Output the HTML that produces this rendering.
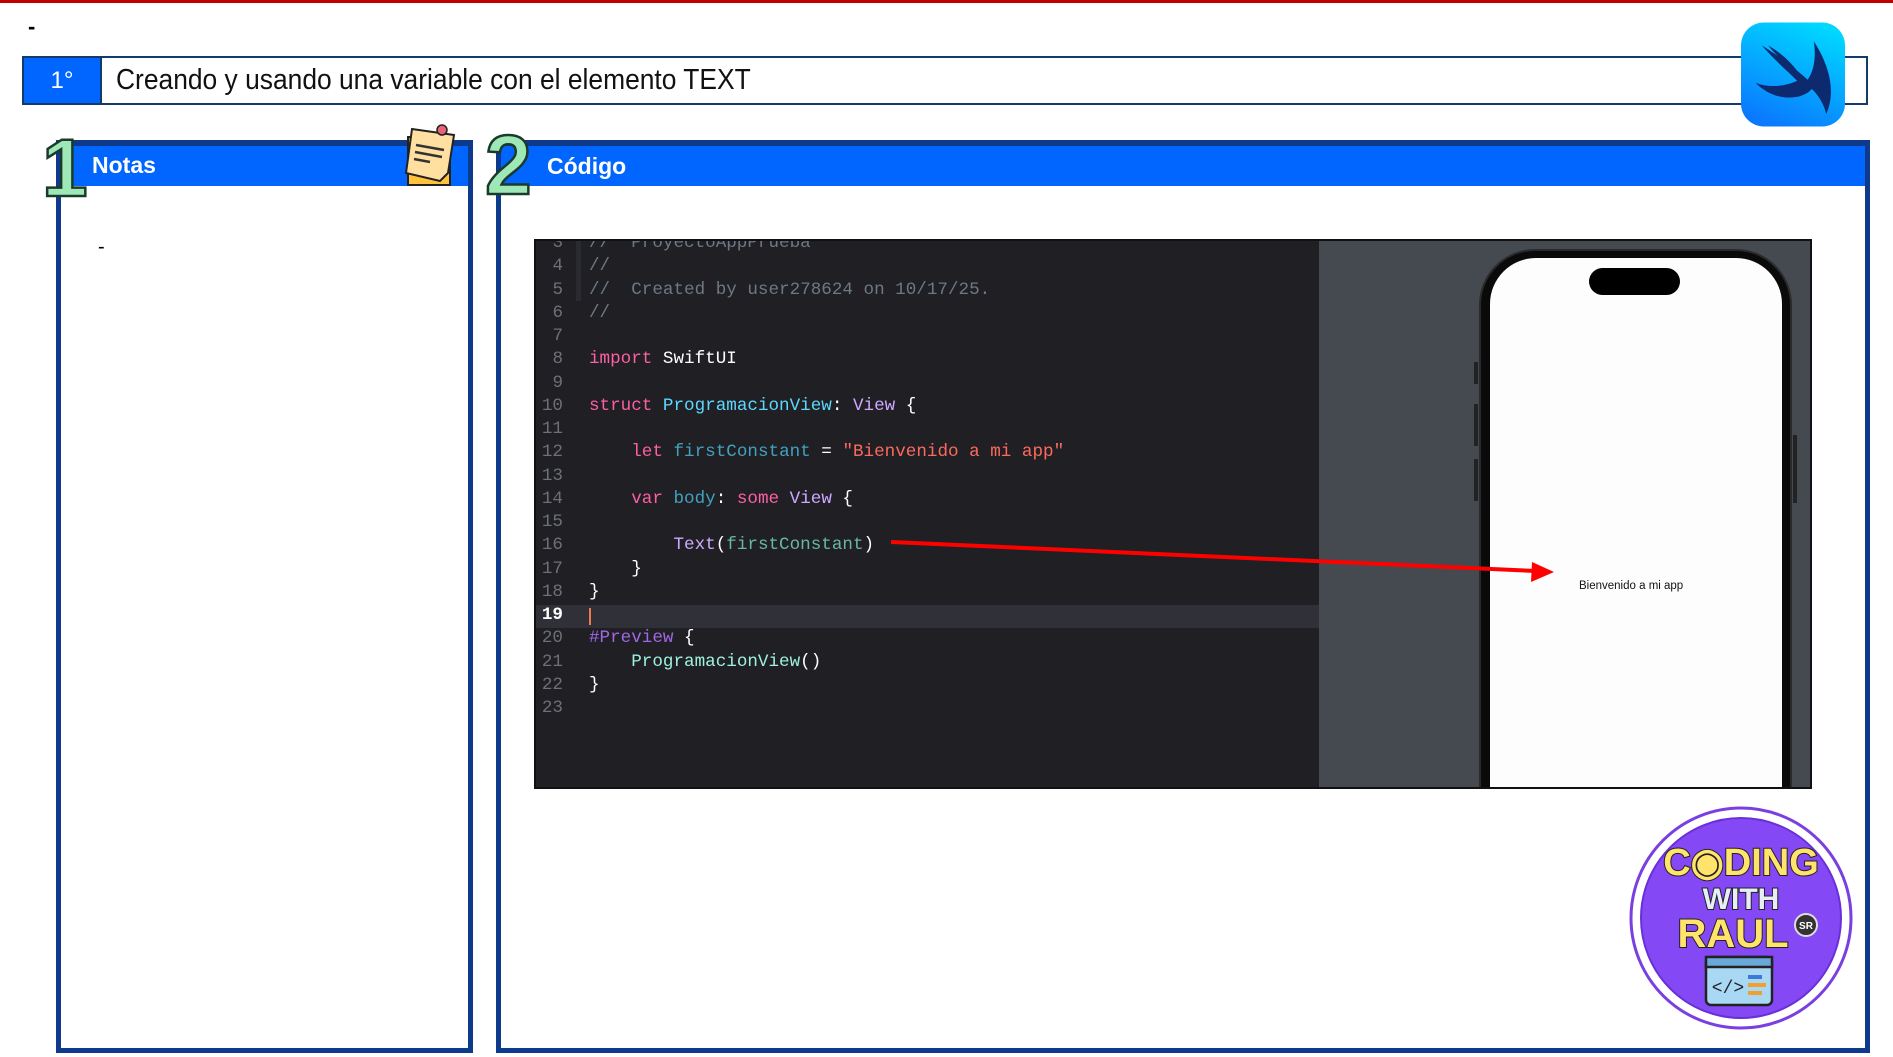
<!DOCTYPE html>
<html><head><meta charset="utf-8"><style>
*{margin:0;padding:0;box-sizing:border-box}
body{width:1893px;height:1057px;background:#fff;position:relative;overflow:hidden;font-family:"Liberation Sans",sans-serif}
.abs{position:absolute}
.code{font-family:"Liberation Mono",monospace;font-size:17.6px;line-height:23.25px;white-space:pre;color:#fff}
.ln{position:absolute;left:0;width:27px;text-align:right;color:#6e7078}
.cl{position:absolute;left:53px}
.k{color:#fc5fa3}.t{color:#5dd8ff}.v{color:#d0a8ff}.c{color:#6c7986}.s{color:#fc6a5d}.d{color:#41a1c0}.g{color:#67b7a4}.p{color:#a167e6}.tt{color:#d0a8ff}.m{color:#9ef1dd}
</style></head><body>
<div class="abs" style="left:0;top:0;width:1893px;height:3px;background:#c00000"></div>
<div class="abs" style="left:28px;top:14px;font-size:22px;font-weight:bold">-</div>

<!-- header -->
<div class="abs" style="left:22px;top:56px;width:1846px;height:49px;border:2px solid #123a6a;background:#fff"></div>
<div class="abs" style="left:22px;top:56px;width:80px;height:49px;background:#0066ff;border:2px solid #123a6a;color:#fff;font-size:24px;text-align:center;line-height:45px">1°</div>
<div class="abs" style="left:116px;top:60px;font-size:29px;line-height:40px;color:#111;transform:scaleX(0.91);transform-origin:0 0;white-space:nowrap">Creando y usando una variable con el elemento TEXT</div>

<!-- swift icon -->
<svg class="abs" style="left:1741px;top:22px" width="104" height="105" viewBox="0 0 100 100">
<defs><linearGradient id="sg" x1="0.7" y1="0" x2="0.3" y2="1"><stop offset="0" stop-color="#00d8ff"/><stop offset="1" stop-color="#0a78ff"/></linearGradient></defs>
<rect x="0" y="0" width="100" height="100" rx="22" fill="url(#sg)"/>
<path d="M14 58 C34 78 60 74 68 64 C75 70 80 80 82 88 C90 70 88 46 70 18 C73 38 68 50 64 55 C52 44 36 32 20 22 C32 36 44 46 54 56 C46 60 30 64 14 58 Z M26 22 C36 34 48 44 58 52 C50 40 40 30 26 22 Z" fill="#0d2a6e"/>
</svg>

<!-- Notas panel -->
<div class="abs" style="left:56px;top:140px;width:417px;height:913px;border:5px solid #0d3a8a;border-top:6px solid #0d3a8a"></div>
<div class="abs" style="left:61px;top:146px;width:407px;height:40px;background:#0066ff"></div>
<div class="abs" style="left:92px;top:149px;color:#fff;font-weight:bold;font-size:23px;line-height:32px">Notas</div>
<div class="abs" style="left:98px;top:236px;font-size:20px">-</div>
<svg class="abs" style="left:40px;top:128px" width="48" height="74" viewBox="0 0 48 74"><text x="2" y="68" font-family="Liberation Sans" font-weight="bold" font-size="82" fill="#9ee8b8" stroke="#1b3a2a" stroke-width="2.5">1</text></svg>
<svg class="abs" style="left:402px;top:123px" width="58" height="68" viewBox="0 0 58 68">
<rect x="6" y="14" width="42" height="48" fill="#ffc23d" stroke="#222" stroke-width="2"/>
<path d="M10 6 L52 12 L46 50 L38 58 L4 50 Z" fill="#ffe0a0" stroke="#222" stroke-width="2"/>
<path d="M14 22 L42 27 M13 29 L40 34 M12 36 L28 39" stroke="#333" stroke-width="2.5"/>
<circle cx="40" cy="7" r="5" fill="#e8627a" stroke="#222" stroke-width="1.5"/>
</svg>

<!-- Codigo panel -->
<div class="abs" style="left:496px;top:140px;width:1374px;height:913px;border:5px solid #0d3a8a;border-top:6px solid #0d3a8a"></div>
<div class="abs" style="left:501px;top:146px;width:1364px;height:40px;background:#0066ff"></div>
<div class="abs" style="left:547px;top:150px;color:#fff;font-weight:bold;font-size:23px;line-height:32px">Código</div>
<svg class="abs" style="left:484px;top:124px" width="56" height="76" viewBox="0 0 56 76"><text x="1" y="70" font-family="Liberation Sans" font-weight="bold" font-size="84" fill="#9ee8b8" stroke="#1b3a2a" stroke-width="2.5">2</text></svg>

<!-- code screenshot -->
<div class="abs" style="left:534px;top:239px;width:1278px;height:550px;background:#1f1f24;border:2px solid #111;overflow:hidden">
 <div class="abs" style="left:783px;top:0;width:495px;height:550px;background:#454950"></div>
 <div class="abs" style="left:0;top:364px;width:783px;height:23px;background:#2f3038"></div>
 <div class="abs" style="left:40px;top:0;width:5px;height:60px;background:#2a2b30"></div>
 <div class="abs code" style="left:0;top:-9px;width:783px;height:560px">
<div class="ln" style="top:0">3</div><div class="cl c" style="top:0">//  ProyectoAppPrueba</div>
<div class="ln" style="top:23.25px">4</div><div class="cl c" style="top:23.25px">//</div>
<div class="ln" style="top:46.5px">5</div><div class="cl c" style="top:46.5px">//  Created by user278624 on 10/17/25.</div>
<div class="ln" style="top:69.75px">6</div><div class="cl c" style="top:69.75px">//</div>
<div class="ln" style="top:93px">7</div>
<div class="ln" style="top:116.25px">8</div><div class="cl" style="top:116.25px"><span class="k">import</span> SwiftUI</div>
<div class="ln" style="top:139.5px">9</div>
<div class="ln" style="top:162.75px">10</div><div class="cl" style="top:162.75px"><span class="k">struct</span> <span class="t">ProgramacionView</span>: <span class="v">View</span> {</div>
<div class="ln" style="top:186px">11</div>
<div class="ln" style="top:209.25px">12</div><div class="cl" style="top:209.25px">    <span class="k">let</span> <span class="d">firstConstant</span> = <span class="s">"Bienvenido a mi app"</span></div>
<div class="ln" style="top:232.5px">13</div>
<div class="ln" style="top:255.75px">14</div><div class="cl" style="top:255.75px">    <span class="k">var</span> <span class="d">body</span>: <span class="k">some</span> <span class="v">View</span> {</div>
<div class="ln" style="top:279px">15</div>
<div class="ln" style="top:302.25px">16</div><div class="cl" style="top:302.25px">        <span class="tt">Text</span>(<span class="g">firstConstant</span>)</div>
<div class="ln" style="top:325.5px">17</div><div class="cl" style="top:325.5px">    }</div>
<div class="ln" style="top:348.75px">18</div><div class="cl" style="top:348.75px">}</div>
<div class="ln" style="top:372px;color:#fff;font-weight:bold">19</div><div class="abs" style="left:53px;top:376px;width:2px;height:17px;background:#f07a50"></div>
<div class="ln" style="top:395.25px">20</div><div class="cl" style="top:395.25px"><span class="p">#Preview</span> {</div>
<div class="ln" style="top:418.5px">21</div><div class="cl" style="top:418.5px">    <span class="m">ProgramacionView</span>()</div>
<div class="ln" style="top:441.75px">22</div><div class="cl" style="top:441.75px">}</div>
<div class="ln" style="top:465px">23</div>
 </div>
 <!-- phone -->
 <div class="abs" style="left:943px;top:8px;width:313px;height:560px;background:#0a0a0a;border-radius:56px 56px 0 0;border:2px solid #2a2a2a"></div>
 <div class="abs" style="left:954px;top:17px;width:292px;height:560px;background:#fdfdfd;border-radius:46px 46px 0 0"></div>
 <div class="abs" style="left:1053px;top:27px;width:91px;height:27px;background:#000;border-radius:14px"></div>
 <div class="abs" style="left:938px;top:121px;width:4px;height:22px;background:#222"></div>
 <div class="abs" style="left:938px;top:163px;width:4px;height:42px;background:#222"></div>
 <div class="abs" style="left:938px;top:218px;width:4px;height:42px;background:#222"></div>
 <div class="abs" style="left:1257px;top:194px;width:4px;height:68px;background:#222"></div>
 <div class="abs" style="left:1043px;top:339px;font-size:11.5px;color:#111;font-family:'Liberation Sans',sans-serif">Bienvenido a mi app</div>
</div>
<!-- arrow -->
<svg class="abs" style="left:0;top:0" width="1893" height="1057"><line x1="891" y1="542" x2="1536" y2="571" stroke="#f00" stroke-width="4"/><polygon points="1554,572 1532,562 1531,582" fill="#f00"/></svg>

<!-- logo -->
<svg class="abs" style="left:1628px;top:805px" width="226" height="226" viewBox="0 0 226 226">
<circle cx="113" cy="113" r="110" fill="#fff" stroke="#7a3fe0" stroke-width="3"/>
<circle cx="113" cy="113" r="100" fill="#8448f5" stroke="#6a2fd8" stroke-width="2"/>
<g font-family="Liberation Sans" font-weight="bold" text-anchor="middle" stroke="#222" stroke-width="2" paint-order="stroke">
<text x="113" y="70" font-size="38" fill="#ffe36b">C◉DING</text>
<text x="113" y="104" font-size="30" fill="#e8eef8">WITH</text>
<text x="105" y="142" font-size="40" fill="#ffe36b">RAUL</text>
</g>
<circle cx="178" cy="120" r="11" fill="#333" stroke="#ddd" stroke-width="2"/><text x="178" y="124" font-size="10" fill="#fff" text-anchor="middle" font-family="Liberation Sans" font-weight="bold">SR</text>
<rect x="78" y="152" width="66" height="48" rx="5" fill="#a9d8f5" stroke="#222" stroke-width="2.5"/>
<rect x="78" y="152" width="66" height="10" fill="#6aa8d8" stroke="#222" stroke-width="2.5"/>
<text x="100" y="188" font-size="18" text-anchor="middle" font-family="Liberation Mono" fill="#222">&lt;/&gt;</text>
<rect x="120" y="170" width="14" height="4" fill="#3a7bd5"/><rect x="120" y="178" width="18" height="4" fill="#f0a030"/><rect x="120" y="186" width="14" height="4" fill="#f0a030"/>
</svg>
</body></html>
